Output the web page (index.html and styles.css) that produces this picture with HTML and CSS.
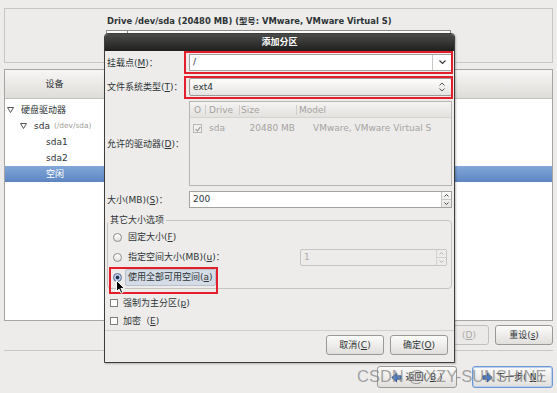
FILE: index.html
```html
<!DOCTYPE html>
<html>
  <head>
    <meta charset="utf-8">
    <title>添加分区</title>
    <link rel="stylesheet" href="styles.css">
  </head>
  <body>
    <div class="screen">
      <div class="drive-box">
        <div class="drive-title">Drive /dev/sda (20480 MB) (型号: VMware, VMware Virtual S)</div>
        <div class="drive-bar"><span class="bar-seg"></span></div>
      </div>

      <div class="devices">
        <div class="dev-head"><span class="dev-col">设备</span></div>
        <div class="dev-list">
          <div class="dev-row lvl0">
            <svg class="expander" width="7" height="6" viewBox="0 0 7 6"><path d="M0.5 0.5h6L3.5 5.5z" fill="#fff" stroke="#555"/></svg>硬盘驱动器
          </div>
          <div class="dev-row lvl1">
            <svg class="expander" width="7" height="6" viewBox="0 0 7 6"><path d="M0.5 0.5h6L3.5 5.5z" fill="#fff" stroke="#555"/></svg>sda <span class="dim">(/dev/sda)</span>
          </div>
          <div class="dev-row lvl2">sda1</div>
          <div class="dev-row lvl2">sda2</div>
          <div class="dev-row lvl2 sel">空闲</div>
        </div>
      </div>

      <div class="actions">
        <button class="btn btn-del" disabled><span class="del-word">删除</span>(<u>D</u>)</button>
        <button class="btn btn-reset">重设(<u>s</u>)</button>
      </div>
      <div class="hsep"></div>
      <div class="nav">
        <button class="btn nav-btn">
          <svg width="11" height="11" viewBox="0 0 11 11"><path d="M0.8 5.5L5.6 1v2.8h4.6v3.4H5.6V10z" fill="#4a7cc8" stroke="#23497f" stroke-width=".8"/></svg>返回(<u>B</u>)
        </button>
        <button class="btn nav-btn focus">
          <svg width="11" height="11" viewBox="0 0 11 11"><path d="M10.2 5.5L5.4 1v2.8H0.8v3.4h4.6V10z" fill="#4a7cc8" stroke="#23497f" stroke-width=".8"/></svg>下一步(<u>N</u>)
        </button>
      </div>

      <div class="dialog">
        <div class="dlg-title">添加分区</div>
        <div class="dlg-body">
          <div class="row row-mount">
            <label class="lbl">挂载点(<u>M</u>)：</label>
            <div class="combo-entry">
              <span class="ce-text">/</span>
              <span class="ce-btn"><svg width="7" height="5" viewBox="0 0 7 5"><path d="M0.5 0.5l3 3 3-3" fill="none" stroke="#333" stroke-width="1.1"/></svg></span>
            </div>
          </div>
          <div class="row row-fs">
            <label class="lbl">文件系统类型(<u>T</u>)：</label>
            <div class="combo">
              <span class="combo-text">ext4</span>
              <svg width="6" height="10" viewBox="0 0 6 10"><path d="M0.5 3.5L3 1l2.5 2.5M0.5 6.5L3 9l2.5-2.5" fill="none" stroke="#555"/></svg>
            </div>
          </div>
          <div class="row row-drives">
            <label class="lbl">允许的驱动器(<u>D</u>)：</label>
            <div class="drives">
              <div class="dr-head">
                <span class="c1">O</span><span class="c2">Drive</span><span class="c3">Size</span><span class="c4">Model</span>
              </div>
              <div class="dr-row">
                <span class="c1"><span class="dr-check"><svg width="6" height="6" viewBox="0 0 6 6"><path d="M0.6 3l1.7 2L5.4 0.8" fill="none" stroke="#9a9894" stroke-width="1.1"/></svg></span></span>
                <span class="c2">sda</span><span class="c3">20480 MB</span><span class="c4">VMware, VMware Virtual S</span>
              </div>
            </div>
          </div>
          <div class="row row-size">
            <label class="lbl">大小(MB)(<u>S</u>)：</label>
            <div class="spin">
              <span class="spin-text">200</span>
              <span class="spin-btns">
                <span class="sb"><svg width="5" height="3" viewBox="0 0 5 3"><path d="M0.5 2.5l2-2 2 2" fill="none" stroke="#444"/></svg></span>
                <span class="sb"><svg width="5" height="3" viewBox="0 0 5 3"><path d="M0.5 0.5l2 2 2-2" fill="none" stroke="#444"/></svg></span>
              </span>
            </div>
          </div>

          <fieldset class="opts">
            <legend>其它大小选项</legend>
            <div class="radio-row"><span class="radio"></span><span class="rlabel">固定大小(<u>F</u>)</span></div>
            <div class="radio-row">
              <span class="radio"></span><span class="rlabel">指定空间大小(MB)(<u>u</u>)：</span>
              <div class="spin spin-off">
                <span class="spin-text">1</span>
                <span class="spin-btns">
                  <span class="sb"><svg width="5" height="3" viewBox="0 0 5 3"><path d="M0.5 2.5l2-2 2 2" fill="none" stroke="#b5b3af"/></svg></span>
                  <span class="sb"><svg width="5" height="3" viewBox="0 0 5 3"><path d="M0.5 0.5l2 2 2-2" fill="none" stroke="#b5b3af"/></svg></span>
                </span>
              </div>
            </div>
            <div class="radio-row"><span class="radio on"></span><span class="rlabel hover">使用全部可用空间(<u>a</u>)</span></div>
          </fieldset>

          <div class="check-row"><span class="check"></span>强制为主分区(<u>p</u>)</div>
          <div class="check-row last"><span class="check"></span>加密（<u>E</u>)</div>
          <div class="dlg-sep"></div>
          <div class="dlg-btns">
            <button class="btn dlg-btn">取消(<u>C</u>)</button>
            <button class="btn dlg-btn">确定(<u>O</u>)</button>
          </div>
        </div>

        <!-- red annotation boxes -->
        <div class="mark mark-mount"></div>
        <div class="mark mark-fs"></div>
        <div class="mark mark-all"></div>
        <svg class="cursor" width="10" height="14" viewBox="0 0 10 14"><path d="M0.5 0.5v11l2.6-2.4 1.9 4.2 1.8-.8-1.9-4.1h3.6z" fill="#000" stroke="#fff" stroke-width="1"/></svg>
      </div>

      <div class="watermark">CSDN @XZY-SUNSHINE</div>
    </div>
  </body>
</html>
```
FILE: styles.css
```css
  *{
    margin: 0;
    padding: 0;
    box-sizing: border-box;
  }
  body{
    background: #edeceb;
    font: 9px/12px "DejaVu Sans", "Noto Sans CJK SC", sans-serif;
    color: #2e3436;
  }
  .screen{
    position: relative;
    width: 557px;
    height: 393px;
    overflow: hidden;
    padding: 8px 4px 0;
  }

  /* top drive frame */
  .drive-box{
    height: 55px;
    border: 1px solid #c8c6c2;
    padding: 6px 0 0 102px;
  }
  .drive-title{
    font-weight: bold;
    font-size: 8.4px;
    line-height: 12px;
    white-space: nowrap;
  }
  .drive-bar{
    display: flex;
    margin: 3px 0 0 -1px;
    width: 345px;
    height: 30px;
    background: #fff;
    border: 1px solid #8d8c89;
  }
  .bar-seg{
    width: 21px;
    border-right: 1px solid #8d8c89;
  }

  /* device tree */
  .devices{
    margin-top: 6px;
    height: 252px;
    border: 1px solid #a7a5a1;
    background: #fff;
  }
  .dev-head{
    height: 29px;
    background: linear-gradient(#f7f6f5, #dfddd9);
    border-bottom: 1px solid #c4c2be;
  }
  .dev-col{
    display: block;
    width: 100px;
    line-height: 28px;
    text-align: center;
    border-right: 1px solid #c4c2be;
  }
  .dev-list{
    padding-top: 3px;
  }
  .dev-row{
    display: flex;
    align-items: center;
    height: 16px;
    white-space: nowrap;
  }
  .expander{
    flex: none;
    margin-right: 7px;
  }
  .lvl0{ padding-left: 2px; }
  .lvl1{ padding-left: 15px; }
  .lvl2{ padding-left: 41px; }
  .dim{
    margin-left: 4px;
    font-size: 7.4px;
    color: #a09e9a;
  }
  .sel{
    background: linear-gradient(#82a7d9, #5d86c1);
    color: #fff;
  }

  /* buttons */
  .btn{
    display: flex;
    align-items: center;
    justify-content: center;
    height: 20px;
    border: 1px solid #9b9995;
    border-radius: 3px;
    background: linear-gradient(#fbfbfa, #e1dfdc);
    font: inherit;
    color: #2e3436;
    white-space: nowrap;
  }
  .btn[disabled]{
    color: #acaaa6;
    border-color: #c2c0bc;
    background: #eceae8;
  }
  .actions{
    display: flex;
    justify-content: flex-end;
    gap: 6px;
    margin-top: 4px;
  }
  .btn-del{
    width: 64px;
    justify-content: flex-end;
    padding-right: 12px;
  }
  .del-word{ margin-right: 8px; }
  .btn-reset{ width: 58px; }
  .hsep{
    margin-top: 5px;
    border-top: 1px solid #c9c7c3;
  }
  .nav{
    display: flex;
    justify-content: flex-end;
    gap: 15px;
    margin-top: 15px;
  }
  .nav-btn{
    height: 22px;
    width: 80px;
    gap: 3px;
  }
  .nav-btn.focus{
    width: 81px;
    border-color: #6f98d2;
    box-shadow: inset 0 0 0 1px #b9cfee;
  }

  /* dialog */
  .dialog{
    position: absolute;
    left: 104px;
    top: 33px;
    width: 351px;
    height: 330px;
    border: 1px solid #3d3d3b;
    border-radius: 4px 4px 0 0;
    background: #edeceb;
    box-shadow: 1px 1px 2px rgba(0,0,0,.25);
  }
  .dlg-title{
    height: 17px;
    line-height: 17px;
    text-align: center;
    color: #fff;
    font-weight: bold;
    background: linear-gradient(#4b4b49, #1f1f1e);
    border-radius: 3px 3px 0 0;
  }
  .dlg-body{
    padding: 0 2px 0 2px;
  }
  .row{
    display: flex;
    align-items: center;
  }
  .lbl{
    flex: none;
    width: 82px;
    white-space: nowrap;
  }
  .row-mount{ margin-top: 3px; height: 17px; }
  .row-fs{ margin-top: 7px; height: 18px; }
  .row-drives{ margin-top: 5px; height: 85px; }
  .row-size{ margin-top: 5px; height: 17px; }

  .combo-entry{
    flex: 1;
    display: flex;
    height: 17px;
    border: 1px solid #a4a29e;
    background: #fff;
  }
  .ce-text{
    flex: 1;
    padding-left: 3px;
    line-height: 15px;
  }
  .ce-btn{
    display: flex;
    align-items: center;
    justify-content: center;
    width: 19px;
    border-left: 1px solid #c9c7c3;
  }
  .combo{
    flex: 1;
    display: flex;
    align-items: center;
    height: 18px;
    padding: 0 6px 0 3px;
    border: 1px solid #9c9a96;
    border-radius: 2px;
    background: linear-gradient(#fdfdfd, #e6e4e1);
  }
  .combo-text{ flex: 1; }

  .drives{
    flex: 1;
    height: 85px;
    border: 1px solid #b7b5b1;
    background: #edeceb;
    color: #a5a39f;
  }
  .dr-head{
    display: flex;
    align-items: center;
    height: 16px;
    background: linear-gradient(#f4f3f2, #e4e2df);
    border-bottom: 1px solid #d6d4d0;
  }
  .dr-head span{
    height: 10px;
    line-height: 10px;
  }
  .dr-head .c2, .dr-head .c3, .dr-head .c4{
    border-left: 1px solid #cfcdc9;
  }
  .c1{ flex: none; width: 15px; text-align: center; }
  .c2{ flex: none; width: 34px; padding-left: 3px; }
  .c3{ flex: none; width: 57px; padding-left: 1px; }
  .c4{ flex: 1; padding-left: 2px; white-space: nowrap; }
  .dr-row{
    display: flex;
    align-items: center;
    height: 20px;
  }
  .dr-row .c2{ padding-left: 4px; }
  .dr-row .c3{ text-align: right; padding-right: 1px; }
  .dr-row .c4{ padding-left: 17px; }
  .dr-check{
    display: inline-flex;
    align-items: center;
    justify-content: center;
    width: 9px;
    height: 9px;
    border: 1px solid #b9b7b3;
    background: #f2f1f0;
    vertical-align: middle;
  }

  .spin{
    flex: 1;
    display: flex;
    height: 17px;
    border: 1px solid #a4a29e;
    background: #fff;
  }
  .spin-text{
    flex: 1;
    padding-left: 3px;
    line-height: 15px;
  }
  .spin-btns{
    display: flex;
    flex-direction: column;
    width: 10px;
    border-left: 1px solid #c9c7c3;
    background: linear-gradient(#fafaf9, #e6e4e1);
  }
  .sb{
    flex: 1;
    display: flex;
    align-items: center;
    justify-content: center;
  }
  .sb + .sb{
    border-top: 1px solid #c9c7c3;
  }
  .spin-off{
    flex: none;
    width: 147px;
    margin: 0 4px 0 auto;
    background: #edeceb;
    border-color: #c7c5c1;
    border-radius: 2px;
    color: #aeaca8;
  }
  .spin-off .spin-btns{
    background: #edeceb;
    border-left-color: #d3d1cd;
  }
  .spin-off .sb + .sb{
    border-top-color: #d3d1cd;
  }

  /* size options */
  .opts{
    margin-top: 6px;
    border: 1px solid #c6c4c0;
    border-radius: 4px;
    padding: 1px 0 1px;
  }
  .opts legend{
    padding: 0 2px;
    line-height: 12px;
  }
  .radio-row{
    display: flex;
    align-items: center;
    height: 20px;
    padding-left: 5px;
    white-space: nowrap;
  }
  .radio{
    flex: none;
    width: 9px;
    height: 9px;
    margin-right: 3px;
    border: 1px solid #8e8c88;
    border-radius: 50%;
    background: linear-gradient(#fff, #e4e2df);
  }
  .radio.on{
    background: radial-gradient(circle, #24344f 0 1.6px, #bcd0ec 2.2px);
    border-color: #55698c;
  }
  .rlabel{
    padding: 0 2px;
    line-height: 15px;
    border: 1px solid transparent;
    border-radius: 2px;
  }
  .rlabel.hover{
    background: #d5dce6;
    border-color: #b7c0cd;
  }
  .check-row{
    display: flex;
    align-items: center;
    height: 19px;
    margin-top: 4px;
    padding-left: 3px;
    white-space: nowrap;
  }
  .check-row.last{
    height: 18px;
    margin-top: 0;
  }
  .check{
    flex: none;
    width: 8px;
    height: 8px;
    margin-right: 5px;
    border: 1px solid #7f7d79;
    background: #fff;
  }
  .dlg-sep{
    margin: 0 -2px;
    border-top: 1px solid #d2d0cc;
  }
  .dlg-btns{
    display: flex;
    justify-content: flex-end;
    gap: 6px;
    margin-top: 4px;
    padding-right: 4px;
  }
  .dlg-btn{ width: 58px; }

  .mark{
    position: absolute;
    border: 2px solid #e41e2b;
  }
  .mark-mount{ left: 79px; top: 17px; width: 269px; height: 23px; }
  .mark-fs{ left: 79px; top: 42px; width: 269px; height: 23px; }
  .mark-all{ left: 4px; top: 233px; width: 109px; height: 27px; }
  .cursor{
    position: absolute;
    left: 11px;
    top: 246px;
  }

  .watermark{
    position: absolute;
    left: 357px;
    top: 366px;
    font: 16.5px/20px "Liberation Sans", Arial, sans-serif;
    color: rgba(135,135,135,.75);
    white-space: nowrap;
  }
```
